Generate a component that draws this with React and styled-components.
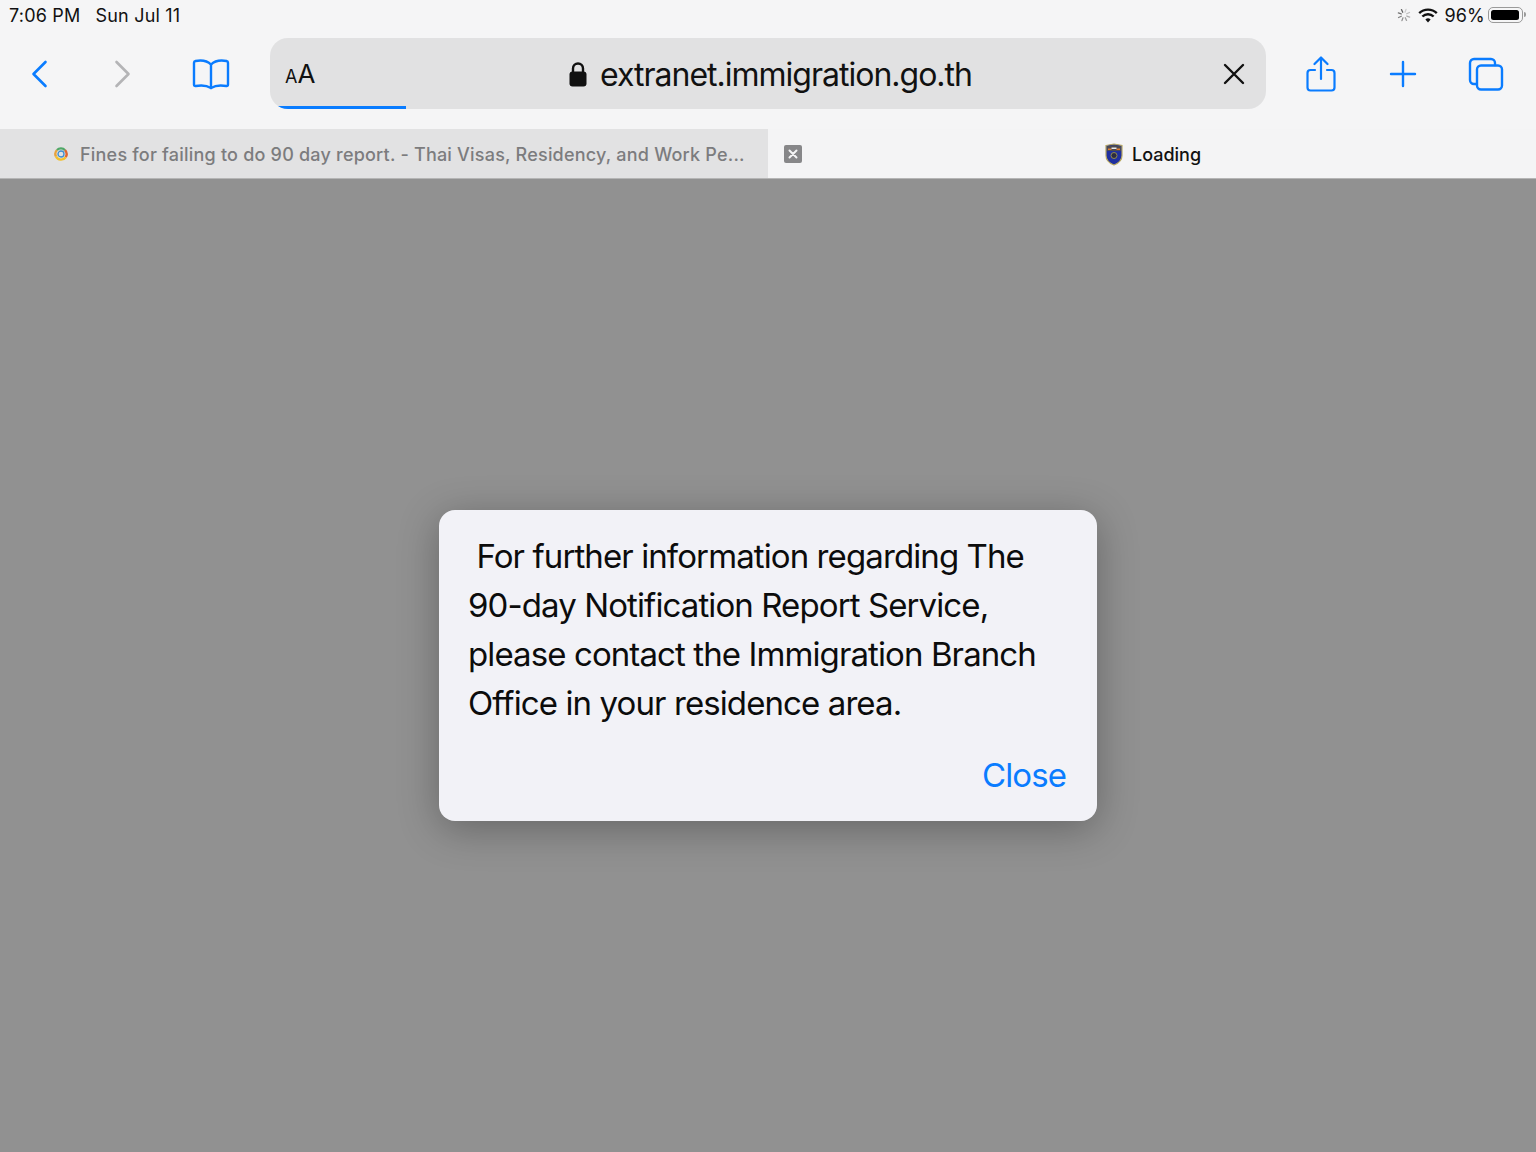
import React from "react";
import styled, { createGlobalStyle } from "styled-components";

const Global = createGlobalStyle`
  html, body {
    margin: 0;
    padding: 0;
    background: #919191;
  }
  body {
    font-family: Inter, "Liberation Sans", sans-serif;
  }
`;

const Page = styled.div`
  width: 1536px;
  height: 1152px;
  display: flex;
  flex-direction: column;
  overflow: hidden;
`;

const Chrome = styled.header`
  background: #f5f5f6;
  flex: none;
`;

const StatusBar = styled.div`
  height: 30px;
  padding: 0 9px 0 9px;
  display: flex;
  align-items: center;
  justify-content: space-between;
  font-size: 18px;
  letter-spacing: 0.2px;
  color: #111;
`;

const StatusGroup = styled.div`
  display: flex;
  align-items: center;
  gap: ${(p) => p.$gap || 0}px;
`;

const Percent = styled.span`
  margin-right: -3px;
`;

const Toolbar = styled.div`
  height: 99px;
  box-sizing: border-box;
  padding: 8px 0 20px 0;
  display: flex;
  align-items: stretch;
`;

const ToolSlot = styled.div`
  width: ${(p) => p.$w}px;
  flex: none;
  display: flex;
  align-items: center;
  justify-content: center;
`;

const UrlBar = styled.div`
  width: 996px;
  flex: none;
  position: relative;
  overflow: hidden;
  border-radius: 18px;
  background: #e1e1e2;
  display: flex;
  align-items: center;
  justify-content: space-between;
  padding: 0 21px 0 15px;
  box-sizing: border-box;
`;

const Reader = styled.span`
  color: #111;
  font-size: 26px;
  line-height: 1;
  small {
    font-size: 18px;
  }
`;

const Address = styled.div`
  position: absolute;
  left: 298px;
  top: 1px;
  bottom: 0;
  display: flex;
  align-items: center;
  gap: 12px;
  color: #111;
  font-size: 32px;
  letter-spacing: -1px;
`;

const Progress = styled.div`
  position: absolute;
  left: 0;
  bottom: 0;
  height: 3px;
  background: #0a7cff;
`;

const TabStrip = styled.div`
  height: 49px;
  display: flex;
  border-bottom: 1px solid #b5b5b5;
  font-size: 18px;
  font-weight: 500;
`;

const Tab = styled.div`
  width: 768px;
  flex: none;
  box-sizing: border-box;
  display: flex;
  align-items: center;
  background: ${(p) => (p.$active ? "#f4f4f5" : "#e2e2e3")};
  color: ${(p) => (p.$active ? "#111" : "#7c7c7e")};
  padding: ${(p) => (p.$active ? "1px 0 0 16px" : "1px 0 0 54px")};
`;

const TabTitle = styled.span`
  margin-left: ${(p) => p.$ml}px;
  letter-spacing: ${(p) => p.$ls || 0}px;
  white-space: nowrap;
`;

const CloseChip = styled.span`
  width: 18px;
  height: 18px;
  border-radius: 2px;
  background: #878789;
  display: flex;
  align-items: center;
  justify-content: center;
  flex: none;
`;

const Backdrop = styled.main`
  flex: 1;
  background: #919191;
  display: flex;
  align-items: center;
  justify-content: center;
`;

const Dialog = styled.div`
  width: 658px;
  height: 311px;
  box-sizing: border-box;
  padding: 22px 31px 0 29px;
  background: #f2f2f7;
  border-radius: 16px;
  box-shadow: 0 8px 40px rgba(0, 0, 0, 0.3);
  display: flex;
  flex-direction: column;
`;

const Message = styled.p`
  margin: 0;
  font-size: 33px;
  line-height: 49px;
  letter-spacing: -0.9px;
  color: #0c0c0c;
  white-space: pre;
`;

const Actions = styled.div`
  display: flex;
  justify-content: flex-end;
  margin-top: 23px;
`;

const CloseButton = styled.button`
  border: 0;
  padding: 0;
  background: none;
  font: inherit;
  font-size: 33px;
  line-height: 49px;
  letter-spacing: -0.9px;
  color: #0a7cff;
`;

const Battery = styled.span`
  width: 35px;
  height: 16px;
  box-sizing: border-box;
  border: 1px solid #9a9a9a;
  border-radius: 5px;
  padding: 2px;
  margin-right: 4px;
  position: relative;
  display: block;
  &::before {
    content: "";
    display: block;
    height: 100%;
    width: 96%;
    background: #000;
    border-radius: 2.5px;
  }
  &::after {
    content: "";
    position: absolute;
    right: -4px;
    top: 4px;
    width: 2px;
    height: 5px;
    background: #9a9a9a;
    border-radius: 0 2px 2px 0;
  }
`;

const Icon = ({ w, h, vb, children, color = "#0a7cff", sw = 2.6 }) => (
  <svg
    width={w}
    height={h}
    viewBox={vb || `0 0 ${w} ${h}`}
    fill="none"
    stroke={color}
    strokeWidth={sw}
    strokeLinecap="round"
    strokeLinejoin="round"
  >
    {children}
  </svg>
);

const Spinner = () => (
  <svg width="16" height="16" viewBox="0 0 16 16" stroke="#555" strokeWidth="1.3" strokeLinecap="round">
    {[...Array(8)].map((_, i) => (
      <line key={i} x1="8" y1="2" x2="8" y2="5" opacity={0.25 + (i * 0.75) / 8} transform={`rotate(${i * 45 + 20} 8 8)`} />
    ))}
  </svg>
);

const Wifi = () => (
  <svg width="20" height="15" viewBox="0 0 20 15" fill="none" stroke="#111" strokeWidth="2.4">
    <path d="M1.2 5.2a12.6 12.6 0 0 1 17.6 0" />
    <path d="M4.4 8.5a8 8 0 0 1 11.2 0" />
    <path d="M10 14.4l-2.6-2.8a3.6 3.6 0 0 1 5.2 0z" fill="#111" stroke="none" />
  </svg>
);

const RingFavicon = () => (
  <svg width="14" height="14" viewBox="0 0 14 14" fill="none" strokeWidth="2.4">
    <path d="M2 9.5A5.6 5.6 0 0 1 3 3" stroke="#e8a33d" />
    <path d="M3 3a5.6 5.6 0 0 1 8 .2" stroke="#4fa868" />
    <path d="M11 3.2a5.6 5.6 0 0 1 .6 7" stroke="#e0652f" />
    <path d="M11.6 10.2A5.6 5.6 0 0 1 2 9.5" stroke="#f2c02e" />
    <circle cx="7" cy="7" r="3" stroke="#3f8fd0" strokeWidth="1.3" />
  </svg>
);

const ShieldFavicon = () => (
  <svg width="18" height="23" viewBox="0 0 18 23">
    <path d="M1 2.5 9 1l8 1.5v10c0 4.5-4 8-8 9.5-4-1.5-8-5-8-9.5z" fill="#1f2f9f" stroke="#b8a860" strokeWidth="1.2" />
    <path d="M2 3.2 9 2l7 1.2V8H2z" fill="#4a4a52" />
    <path d="M3 5.5h3.5v1.5H3z" fill="#e07a30" />
    <path d="M11.5 5.5H15v1.500h-3.5z" fill="#e07a30" />
    <path d="M6.5 4.5h5v1.5h-5z" fill="#e8e8e8" />
    <circle cx="9" cy="12.500" r="3" fill="#2a2a40" stroke="#8f8a50" strokeWidth="1" />
  </svg>
);

export default function App() {
  return (
    <Page>
      <Global />
      <Chrome>
        <StatusBar>
          <StatusGroup $gap={15}>
            <span>7:06 PM</span>
            <span>Sun Jul 11</span>
          </StatusGroup>
          <StatusGroup $gap={6}>
            <Spinner />
            <Wifi />
            <Percent>96%</Percent>
            <Battery />
          </StatusGroup>
        </StatusBar>
        <Toolbar>
          <ToolSlot $w={80}>
            <Icon w={20} h={30}>
              <path d="M15.500 3 3.500 15 15.500 27" />
            </Icon>
          </ToolSlot>
          <ToolSlot $w={84}>
            <Icon w={20} h={30} color="#b4b4b6">
              <path d="M4.500 3l12 12-12 12" />
            </Icon>
          </ToolSlot>
          <ToolSlot $w={94}>
            <Icon w={38} h={32} sw={2.4}>
              <path d="M19 6.5C15.5 3 9 2 3.5 3c-1 .2-1.5.8-1.5 1.8v22c0 1 .7 1.4 1.7 1.2C9 27 15 27.5 19 30c4-2.5 10-3 15.3-2 1 .2 1.7-.2 1.7-1.2v-22c0-1-.5-1.6-1.5-1.8C29 2 22.5 3 19 6.5z" />
              <path d="M19 6.5V30" />
            </Icon>
          </ToolSlot>
          <ToolSlot $w={12} />
          <UrlBar>
            <Reader>
              <small>A</small>A
            </Reader>
            <Address>
              <svg width="20" height="26" viewBox="0 0 20 26">
                <path d="M5 12V7.5a5 5 0 0 1 10 0V12" fill="none" stroke="#111" strokeWidth="2.4" />
                <rect x="1.5" y="10.5" width="17" height="15" rx="3" fill="#111" />
              </svg>
              extranet.immigration.go.th
            </Address>
            <Icon w={22} h={22} color="#111" sw={2.4}>
              <path d="M2 2l18 18M20 2 2 20" />
            </Icon>
            <Progress style={{ width: 136 }} />
          </UrlBar>
          <ToolSlot $w={110}>
            <Icon w={30} h={36} sw={2.2}>
              <path d="M9 14H4.5A3 3 0 0 0 1.5 17v14.5a3 3 0 0 0 3 3h21a3 3 0 0 0 3-3V17a3 3 0 0 0-3-3H21" />
              <path d="M15 23V2M8.5 8 15 1.5 21.500 8" />
            </Icon>
          </ToolSlot>
          <ToolSlot $w={54}>
            <Icon w={28} h={28} sw={2.4}>
              <path d="M14 2v24M2 14h24" />
            </Icon>
          </ToolSlot>
          <ToolSlot $w={112}>
            <Icon w={36} h={34} sw={2.4}>
              <path d="M27 8V6a4 4 0 0 0-4-4H6a4 4 0 0 0-4 4v17a4 4 0 0 0 4 4h2" />
              <rect x="9" y="8.500" width="25" height="24" rx="4" />
            </Icon>
          </ToolSlot>
        </Toolbar>
        <TabStrip>
          <Tab>
            <RingFavicon />
            <TabTitle $ml={12} $ls={0.21}>Fines for failing to do 90 day report. - Thai Visas, Residency, and Work Pe...</TabTitle>
          </Tab>
          <Tab $active>
            <CloseChip>
              <Icon w={10} h={10} color="#f4f4f5" sw={2}>
                <path d="M1.500 1.500l7 7M8.500 1.500l-7 7" />
              </Icon>
            </CloseChip>
            <span style={{ width: 303 }} />
            <ShieldFavicon />
            <TabTitle $ml={9}>Loading</TabTitle>
          </Tab>
        </TabStrip>
      </Chrome>
      <Backdrop>
        <Dialog>
          <Message>{` For further information regarding The\n90-day Notification Report Service,\nplease contact the Immigration Branch\nOffice in your residence area.`}</Message>
          <Actions>
            <CloseButton>Close</CloseButton>
          </Actions>
        </Dialog>
      </Backdrop>
    </Page>
  );
}
